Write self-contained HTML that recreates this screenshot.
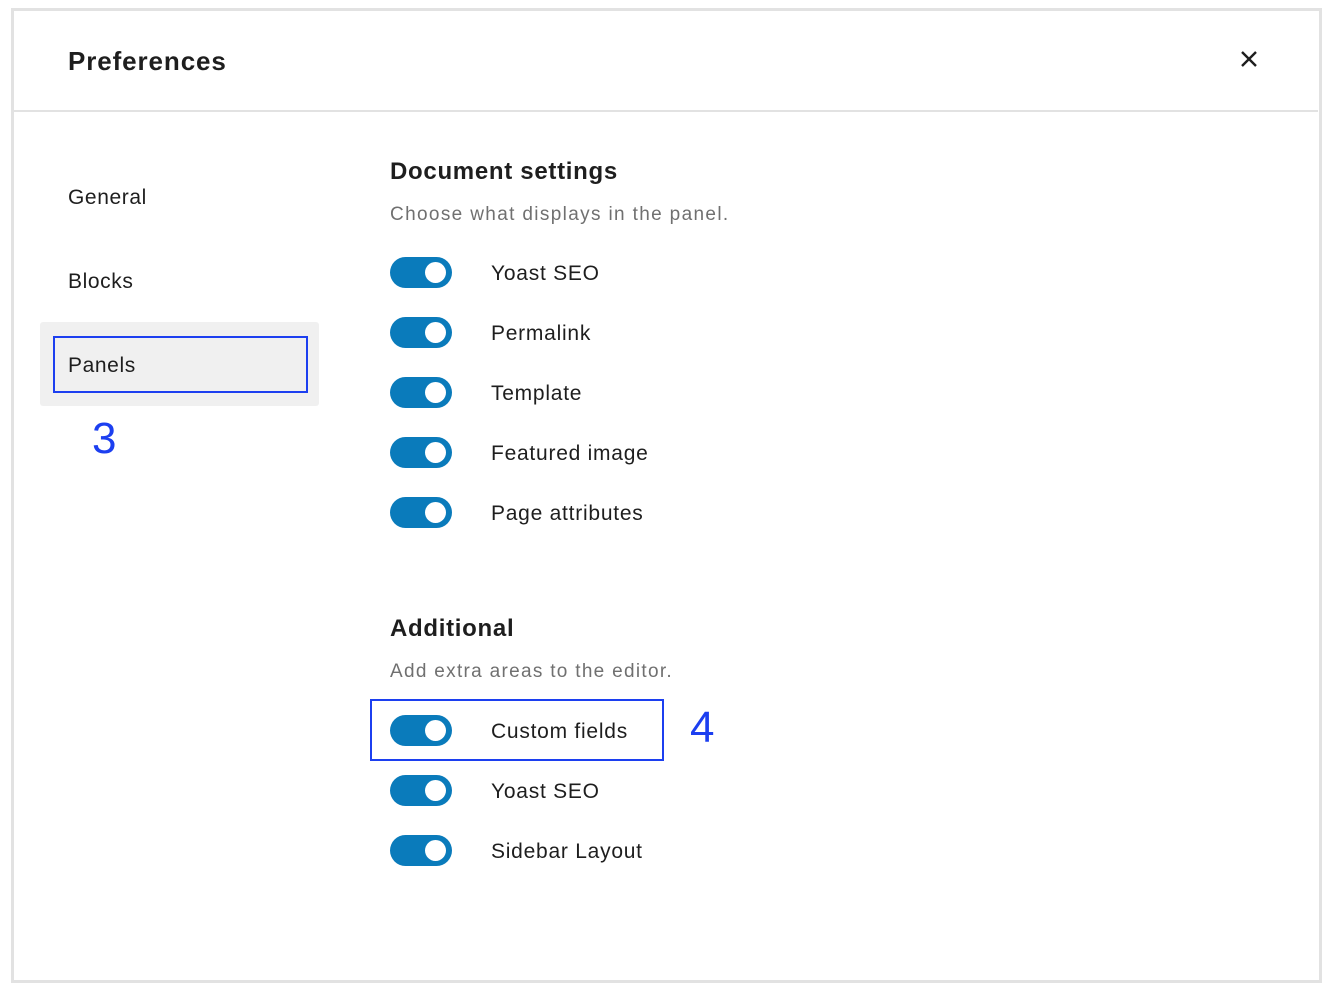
<!DOCTYPE html>
<html><head><meta charset="utf-8"><style>
body{margin:0;width:1332px;height:991px;background:#fff;position:relative;font-family:"Liberation Sans",Arial,sans-serif;color:#1e1e1e;overflow:hidden}
.a{position:absolute;white-space:nowrap}
.frame{position:absolute;left:11px;top:8px;width:1305px;height:969px;border:3px solid #e2e2e2}
.hl{position:absolute;left:14px;top:110px;width:1304px;height:2px;background:#e2e2e2}
.tg{position:absolute;left:390px;width:62px;height:31px;border-radius:16px;background:#0a7bbb}
.tg::after{content:"";position:absolute;left:35px;top:5px;width:21px;height:21px;border-radius:50%;background:#fff}
.lb{position:absolute;left:491px;font-size:21px;line-height:24px;letter-spacing:0.75px}
.nav{font-size:21px;letter-spacing:0.6px}
</style></head><body>
<div class="frame"></div>
<div class="hl"></div>
<div class="a" style="left:68px;top:46px;font-size:26px;font-weight:bold;line-height:30px;letter-spacing:0.9px">Preferences</div>
<svg class="a" style="left:1239px;top:49px" width="20" height="20" viewBox="0 0 20 20"><path d="M3 3L17 17M17 3L3 17" stroke="#1e1e1e" stroke-width="2.4"/></svg>
<div class="a nav" style="left:68px;top:186px">General</div>
<div class="a nav" style="left:68px;top:270px">Blocks</div>
<div class="a" style="left:40px;top:322px;width:279px;height:84px;background:#f0f0f0;border-radius:3px"></div>
<div class="a" style="left:53px;top:336px;width:251px;height:53px;border:2px solid #1c3ff0"></div>
<div class="a nav" style="left:68px;top:354px">Panels</div>
<div class="a" style="left:92px;top:414px;font-size:44px;color:#1c3ff0;line-height:50px">3</div>
<div class="a" style="left:390px;top:158px;font-size:24px;font-weight:bold;line-height:28px;letter-spacing:0.7px">Document settings</div>
<div class="a" style="left:390px;top:203px;font-size:19px;color:#707070;line-height:24px;letter-spacing:1.35px">Choose what displays in the panel.</div>
<div class="tg" style="top:257px"></div><div class="lb" style="top:262px">Yoast SEO</div>
<div class="tg" style="top:317px"></div><div class="lb" style="top:322px">Permalink</div>
<div class="tg" style="top:377px"></div><div class="lb" style="top:382px">Template</div>
<div class="tg" style="top:437px"></div><div class="lb" style="top:442px">Featured image</div>
<div class="tg" style="top:497px"></div><div class="lb" style="top:502px">Page attributes</div>
<div class="a" style="left:390px;top:615px;font-size:24px;font-weight:bold;line-height:28px;letter-spacing:0.7px">Additional</div>
<div class="a" style="left:390px;top:660px;font-size:19px;color:#707070;line-height:24px;letter-spacing:1.3px">Add extra areas to the editor.</div>
<div class="a" style="left:370px;top:699px;width:290px;height:58px;border:2px solid #1c3ff0"></div>
<div class="a" style="left:690px;top:703px;font-size:44px;color:#1c3ff0;line-height:50px">4</div>
<div class="tg" style="top:715px"></div><div class="lb" style="top:720px">Custom fields</div>
<div class="tg" style="top:775px"></div><div class="lb" style="top:780px">Yoast SEO</div>
<div class="tg" style="top:835px"></div><div class="lb" style="top:840px">Sidebar Layout</div>
</body></html>
